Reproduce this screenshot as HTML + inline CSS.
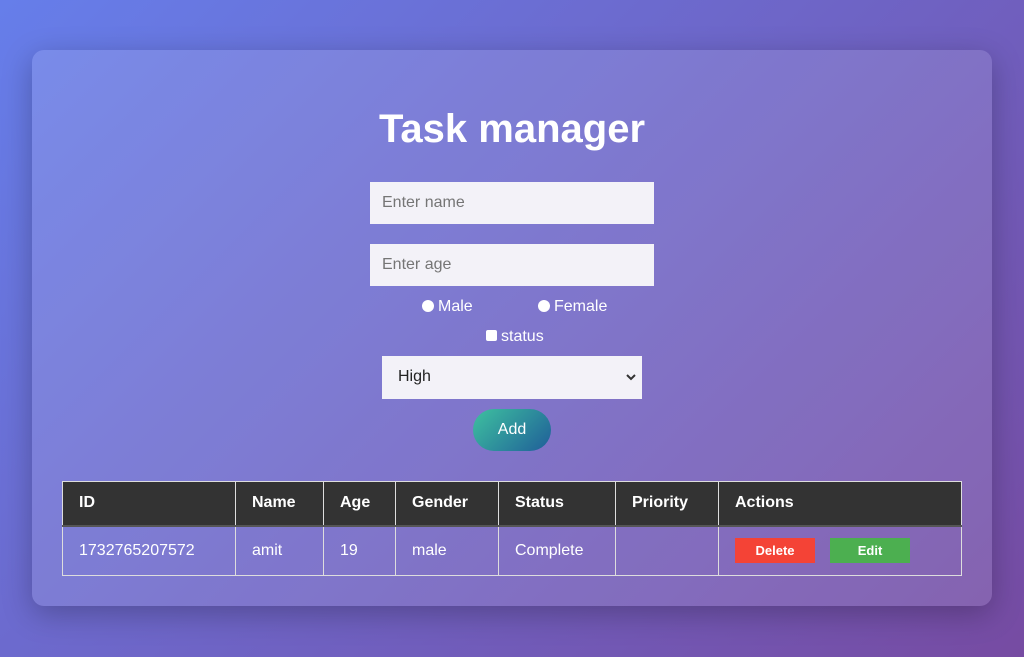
<!DOCTYPE html>
<html><head><style>
*{box-sizing:border-box;margin:0;padding:0}
body{width:1024px;height:657px;overflow:hidden;font-family:"Liberation Sans",Arial,sans-serif;background:linear-gradient(135deg,#667eea 0%,#764ba2 100%);position:relative;color:#fff}
.card{position:absolute;left:32px;top:50px;width:960px;height:556px;border-radius:12px;background:rgba(255,255,255,0.12);box-shadow:0 8px 30px rgba(0,0,0,0.25)}
h1{position:absolute;top:107px;left:0;width:1024px;text-align:center;font-size:40px;font-weight:bold}
.inp{position:absolute;left:370px;width:284px;height:42px;background:#f3f2f8;color:#757575;font-size:16px;padding:12px 12px}
.t{position:absolute;font-size:16px;color:#fff}
.rad{display:inline-block;width:12px;height:12px;border-radius:50%;background:#fff;vertical-align:-1px;margin-right:4px}
.chk{display:inline-block;width:11px;height:11px;background:#fff;border-radius:2px;vertical-align:0px;margin-right:4px}
.sel{position:absolute;left:382px;top:356px;width:260px;height:43px;background:#f3f2f8;color:#222;font-size:16px;padding:12px 16px}
.add{position:absolute;left:473px;top:409px;width:78px;height:42px;border-radius:21px;background:linear-gradient(135deg,#3ec19f,#1f5e99);font-size:16px;text-align:center;line-height:42px}
table{position:absolute;left:62px;top:481px;width:900px;border-collapse:collapse;font-size:16px}
td,th{border:1px solid #ddd;text-align:left;padding:0 16px}
th{background:#333;height:44px;font-weight:bold;border-bottom:2px solid #555}
td{height:50px}
.b{display:inline-block;width:80px;height:25px;font-size:13px;font-weight:bold;text-align:center;line-height:25px;margin-right:12px}
</style></head><body>
<div class="card"></div>
<h1>Task manager</h1>
<div class="inp" style="top:182px">Enter name</div>
<div class="inp" style="top:244px">Enter age</div>
<div class="t" style="left:422px;top:298px"><span class="rad"></span>Male</div>
<div class="t" style="left:538px;top:298px"><span class="rad"></span>Female</div>
<div class="t" style="left:486px;top:328px"><span class="chk"></span>status</div>
<div class="sel">High<svg style="position:absolute;right:6px;top:17px" width="10" height="8"><path d="M1 2l4 4 4-4" stroke="#333" stroke-width="2" fill="none"/></svg></div>
<div class="add">Add</div>
<table>
<tr><th style="width:173px">ID</th><th style="width:88px">Name</th><th style="width:72px">Age</th><th style="width:103px">Gender</th><th style="width:117px">Status</th><th style="width:103px">Priority</th><th>Actions</th></tr>
<tr><td>1732765207572</td><td>amit</td><td>19</td><td>male</td><td>Complete</td><td></td><td><span class="b" style="background:#f44336">Delete</span><span class="b" style="background:#4caf50;margin-left:3px">Edit</span></td></tr>
</table>
</body></html>
